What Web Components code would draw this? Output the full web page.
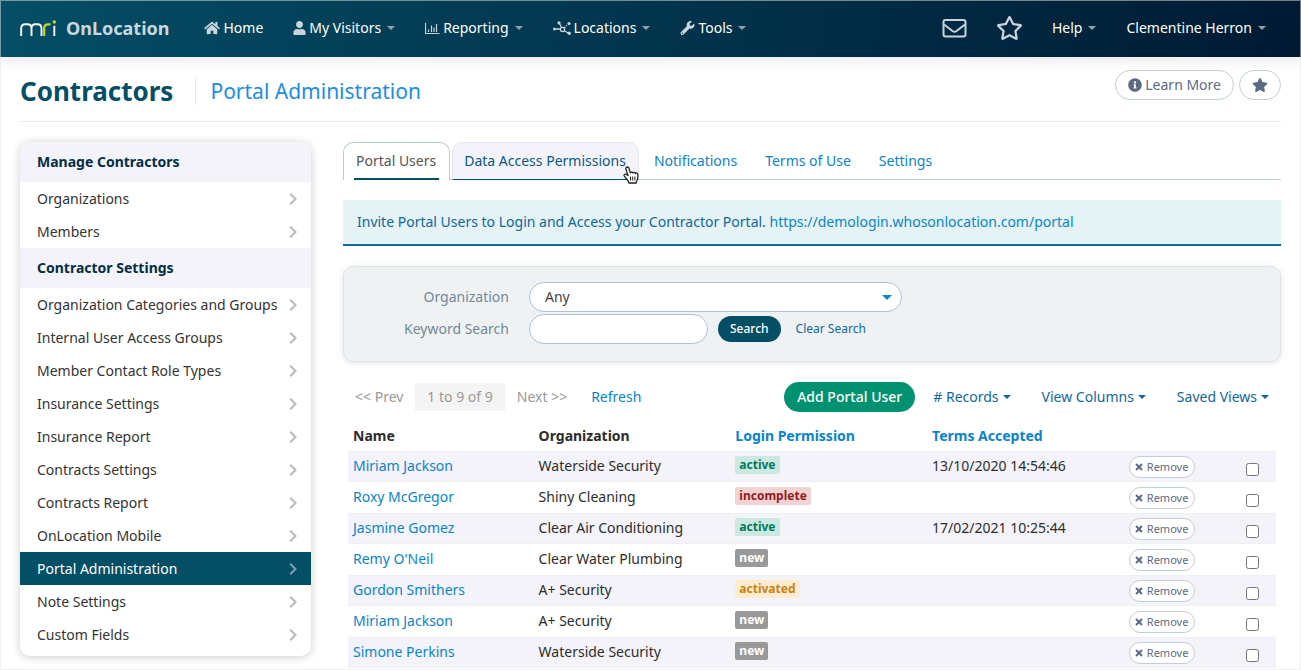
<!DOCTYPE html>
<html lang="en">
<head>
<meta charset="utf-8">
<meta name="viewport" content="width=device-width, initial-scale=1">
<title>Contractors - Portal Administration</title>
<style>
    body {
        margin: 0;
        background: #fff;
        color: #2d2d2d;
        font: 14px/20px "Noto Sans", sans-serif;
    }
</style>
</head>
<body>
<app-shell>
    <app-header slot="header">
        <nav-item icon="home" href="#home">Home</nav-item>
        <nav-item icon="user" menu>My Visitors</nav-item>
        <nav-item icon="chart" menu>Reporting</nav-item>
        <nav-item icon="nodes" menu>Locations</nav-item>
        <nav-item icon="wrench" menu>Tools</nav-item>
        <nav-item slot="right" icon="envelope" size="large" href="#messages" label="Messages"></nav-item>
        <nav-item slot="right" icon="star-outline" size="large" href="#favourites" label="Favourites"></nav-item>
        <nav-item slot="right" menu>Help</nav-item>
        <nav-item slot="right" menu>Clementine Herron</nav-item>
    </app-header>

    <page-title slot="title" section="Contractors">Portal Administration</page-title>

    <side-menu slot="menu">
        <side-heading>Manage Contractors</side-heading>
        <side-link>Organizations</side-link>
        <side-link>Members</side-link>
        <side-heading>Contractor Settings</side-heading>
        <side-link>Organization Categories and Groups</side-link>
        <side-link>Internal User Access Groups</side-link>
        <side-link>Member Contact Role Types</side-link>
        <side-link>Insurance Settings</side-link>
        <side-link>Insurance Report</side-link>
        <side-link>Contracts Settings</side-link>
        <side-link>Contracts Report</side-link>
        <side-link>OnLocation Mobile</side-link>
        <side-link active>Portal Administration</side-link>
        <side-link>Note Settings</side-link>
        <side-link>Custom Fields</side-link>
    </side-menu>

    <tab-bar>
        <tab-link selected>Portal Users</tab-link>
        <tab-link hovered>Data Access Permissions</tab-link>
        <tab-link>Notifications</tab-link>
        <tab-link>Terms of Use</tab-link>
        <tab-link>Settings</tab-link>
    </tab-bar>
    <info-notice href="https://demologin.whosonlocation.com/portal">Invite Portal Users to Login and Access your Contractor Portal.</info-notice>
    <filter-panel></filter-panel>
    <list-toolbar></list-toolbar>
    <user-table></user-table>
</app-shell>

<script>
const ICONS = {
    home: ["0 0 576 512", `<path d="M280.37 148.26L96 300.11V464a16 16 0 0 0 16 16l112.06-.29a16 16 0 0 0 15.92-16V368a16 16 0 0 1 16-16h64a16 16 0 0 1 16 16v95.64a16 16 0 0 0 16 16.05L464 480a16 16 0 0 0 16-16V300L295.67 148.26a12.19 12.19 0 0 0-15.3 0zM571.6 251.47L488 182.56V44.05a12 12 0 0 0-12-12h-56a12 12 0 0 0-12 12v72.61L318.47 43a48 48 0 0 0-61 0L4.34 251.47a12 12 0 0 0-1.6 16.9l25.5 31A12 12 0 0 0 45.15 301l235.22-193.74a12.19 12.19 0 0 1 15.3 0L530.9 301a12 12 0 0 0 16.9-1.6l25.5-31a12 12 0 0 0-1.7-16.93z"/>`],
    user: ["0 0 448 512", `<path d="M224 256c70.7 0 128-57.3 128-128S294.7 0 224 0 96 57.3 96 128s57.3 128 128 128zm89.6 32h-16.7c-22.2 10.2-46.9 16-72.9 16s-50.6-5.8-72.9-16h-16.7C60.2 288 0 348.2 0 422.4V464c0 26.5 21.5 48 48 48h352c26.5 0 48-21.5 48-48v-41.6c0-74.2-60.2-134.4-134.4-134.4z"/>`],
    chart: ["0 0 15 14", `<path d="M.5 2v10.500H14.500M3.500 11V8.500M6.500 11V4.500M9 11V6.500M11.500 11V3" fill="none" stroke="currentColor" stroke-width="1.200"/>`],
    nodes: ["0 0 18 14", `<g fill="none" stroke="currentColor" stroke-width="1.300"><circle cx="9.500" cy="8.500" r="2.100"/><path d="M3 8h4.200M6.500 2.500l2 4M11.200 7L12.500 5.800M11.200 9.800l4.500 2.400"/></g><circle cx="1.500" cy="8" r="1.500"/><circle cx="6" cy="1.800" r="1.600"/><circle cx="13.600" cy="4.600" r=".7"/><circle cx="16" cy="2.600" r="1.600"/><circle cx="16.200" cy="12.300" r="1.700"/>`],
    wrench: ["0 0 512 512", `<path d="M507.73 109.1c-2.24-9.03-13.54-12.09-20.12-5.51l-74.36 74.36-67.88-11.31-11.31-67.88 74.36-74.36c6.62-6.62 3.43-17.9-5.66-20.16-47.38-11.74-99.55.91-136.58 37.93-39.64 39.64-50.55 97.1-34.05 147.2L18.74 402.76c-24.99 24.99-24.99 65.51 0 90.5 24.99 24.99 65.51 24.99 90.5 0l213.21-213.21c50.12 16.71 107.47 5.68 147.37-34.22 37.07-37.07 49.7-89.32 37.91-136.73zM64 472c-13.25 0-24-10.75-24-24 0-13.26 10.75-24 24-24s24 10.75 24 24c0 13.25-10.75 24-24 24z"/>`],
    envelope: ["0 0 24 24", `<g fill="none" stroke="currentColor" stroke-width="2"><rect x="1" y="4" width="22" height="16.500" rx="2"/><path d="M1.500 8.500l8.500 6.500q2 1.400 4 0l8.500-6.500"/></g>`],
    "star-outline": ["20 0 536 512", `<path d="M528.1 171.5L382 150.2 316.700 17.800c-11.700-23.600-45.600-23.900-57.400 0L194 150.200 47.900 171.500c-26.200 3.800-36.700 36.100-17.700 54.600l105.700 103-25 145.500c-4.500 26.300 23.200 46 46.400 33.700L288 439.600l130.700 68.700c23.200 12.200 50.900-7.400 46.400-33.700l-25-145.500 105.700-103c19-18.500 8.500-50.800-17.700-54.600zM388.600 312.300l23.700 138.400L288 385.400l-124.300 65.300 23.700-138.400-100.600-98 139-20.200 62.200-126 62.200 126 139 20.200-100.600 98z"/>`],
    star: ["0 0 576 512", `<path d="M259.300 17.800L194 150.200 47.900 171.500c-26.200 3.800-36.700 36.100-17.700 54.600l105.700 103-25 145.500c-4.500 26.300 23.200 46 46.400 33.700L288 439.600l130.700 68.700c23.200 12.200 50.900-7.400 46.400-33.700l-25-145.500 105.700-103c19-18.500 8.500-50.800-17.700-54.600L382 150.200 316.700 17.800c-11.700-23.600-45.600-23.900-57.400 0z"/>`],
    info: ["0 0 512 512", `<path d="M256 8C119.043 8 8 119.083 8 256c0 136.997 111.043 248 248 248s248-111.003 248-248C504 119.083 392.957 8 256 8zm0 110c23.196 0 42 18.804 42 42s-18.804 42-42 42-42-18.804-42-42 18.804-42 42-42zm56 254c0 6.627-5.373 12-12 12h-88c-6.627 0-12-5.373-12-12v-24c0-6.627 5.373-12 12-12h12v-64h-12c-6.627 0-12-5.373-12-12v-24c0-6.627 5.373-12 12-12h64c6.627 0 12 5.373 12 12v100h12c6.627 0 12 5.373 12 12v24z"/>`],
    caret: ["0 0 8 4", `<path d="M0 0h8L4 4z"/>`],
    chevron: ["0 0 8 12", `<path d="M1.200 .8l5.300 5.200-5.300 5.200" fill="none" stroke="currentColor" stroke-width="2"/>`],
    cross: ["0 0 8 8", `<path d="M1 1l6 6M7 1L1 7" fill="none" stroke="currentColor" stroke-width="2"/>`],
    hand: ["0 0 16 18", `<path d="M4.200 1c-1.200.2-1.700 1.200-1.300 2.300l2.200 6.300-1.600-1.200C2.400 7.700 1 8.300 1 9.500c0 .7 2.600 3.300 4 5.300.6.900.8 1.300.8 2.200h7.400c.1-1.200.5-2 1-3 .8-1.700.9-3.700.6-5.600-.2-1.400-1.600-1.700-2.300-.9-.2-1.200-1.800-1.500-2.500-.5-.5-1.100-2-1.200-2.700-.2L5.900 2.100C5.600 1.300 5 .9 4.200 1z" fill="#fff" stroke="#222" stroke-width="1.300" stroke-linejoin="round"/><path d="M7.500 10.500v4M9.700 10.500v4M11.900 10.500v4" stroke="#222"/>`],
    logo: ["0 0 36 17", `<g fill="none" stroke-width="1.900"><path d="M1.200 16V8.500Q1.200 4.300 5.500 4.300H7.300Q11.500 4.300 11.500 8.500V16M11.500 8.500Q11.500 4.300 15.500 4.300H17.300Q21.500 4.300 21.500 8.500V16" stroke="#fff"/><path d="M24.200 16V8.500Q24.200 4.300 28.200 4.300H30.500" stroke="#c1d72e" stroke-width="2.200"/><path d="M34.300 16V5.800" stroke="#fff"/></g><circle cx="34.300" cy="2" r="1.700" fill="#c1d72e"/>`]
};

// attaches the shadow root shared by every element below
class BaseElement extends HTMLElement {
    render(html) {
        if (!this.shadowRoot) {
            this.attachShadow({ mode: "open" });
        }
        this.shadowRoot.innerHTML = html;
    }
}

class AppIcon extends BaseElement {
    connectedCallback() {
        const [box, shape] = ICONS[this.getAttribute("name")];
        this.render(`
            <style>
                :host { display: inline-flex; flex: none; }
                svg { display: block; width: 100%; height: 100%; }
            </style>
            <svg viewBox="${box}" fill="currentColor" aria-hidden="true">${shape}</svg>
        `);
    }
}

class AppShell extends BaseElement {
    connectedCallback() {
        this.render(`
            <style>
                :host {
                    display: block;
                    min-height: 100vh;
                }
                :host::after {
                    content: "";
                    position: fixed;
                    inset: 0;
                    border: 1px solid rgba(225, 228, 230, 0.5);
                    pointer-events: none;
                }
                .title { padding: 0 20px; }
                .content {
                    display: grid;
                    grid-template-columns: 291px minmax(0, 1fr);
                    align-items: start;
                    gap: 32px;
                    padding: 20px 20px 0;
                }
            </style>
            <slot name="header"></slot>
            <div class="title"><slot name="title"></slot></div>
            <div class="content">
                <slot name="menu"></slot>
                <main><slot></slot></main>
            </div>
        `);
    }
}

class AppHeader extends BaseElement {
    connectedCallback() {
        this.render(`
            <style>
                :host {
                    display: flex;
                    align-items: center;
                    justify-content: space-between;
                    height: 57px;
                    padding: 0 35px 1px 20px;
                    background: linear-gradient(100deg, #044e66, #001a33);
                    box-shadow: 0 3px 12px rgba(60, 60, 90, 0.12);
                    color: #fff;
                    box-sizing: border-box;
                }
                nav, .right, .brand {
                    display: flex;
                    align-items: center;
                }
                nav, .right { gap: 30px; }
                .brand {
                    gap: 10px;
                    margin-right: 5px;
                    color: #c8d8df;
                    font-size: 18px;
                    font-weight: 700;
                    text-decoration: none;
                }
                .brand app-icon { width: 36px; height: 17px; }
            </style>
            <nav>
                <a class="brand" href="#"><app-icon name="logo"></app-icon>OnLocation</a>
                <slot></slot>
            </nav>
            <div class="right"><slot name="right"></slot></div>
        `);
    }
}

class NavItem extends BaseElement {
    connectedCallback() {
        const icon = this.getAttribute("icon");
        const menu = this.hasAttribute("menu");
        const label = this.getAttribute("label");
        const tag = menu ? "button" : "a";
        const attrs = menu ? `type="button" aria-haspopup="true"` : `href="${this.getAttribute("href")}"`;
        this.render(`
            <style>
                :host { display: block; }
                a, button {
                    display: flex;
                    align-items: center;
                    gap: 3px;
                    padding: 0;
                    border: 0;
                    background: none;
                    color: inherit;
                    font: inherit;
                    text-decoration: none;
                    white-space: nowrap;
                    cursor: pointer;
                }
                .icon { width: 15px; height: 14px; color: #c9d5dc; }
                .home { width: 16px; }
                .user { width: 13px; }
                .nodes { width: 18px; }
                .large { width: 25px; height: 24px; }
                .caret {
                    width: 8px;
                    height: 4px;
                    margin-left: 3px;
                    color: #8ea3b0;
                }
            </style>
            <${tag} ${attrs} ${label ? `aria-label="${label}"` : ""}>
                ${icon ? `<app-icon class="icon ${icon} ${this.getAttribute("size") || ""}" name="${icon}"></app-icon>` : ""}
                ${label ? "" : "<slot></slot>"}
                ${menu ? `<app-icon class="caret" name="caret"></app-icon>` : ""}
            </${tag}>
        `);
    }
}

class PageTitle extends BaseElement {
    connectedCallback() {
        this.render(`
            <style>
                :host {
                    display: flex;
                    justify-content: space-between;
                    padding: 13px 0 16px;
                    border-bottom: 1px solid #ebebeb;
                }
                .heading, .actions { display: flex; }
                .heading { align-items: center; padding-top: 7px; }
                h1, h2 { margin: 0; line-height: 28px; }
                h1 {
                    padding-right: 22px;
                    border-right: 1px solid #e8e8ec;
                    color: #044e66;
                    font-size: 26px;
                    font-weight: 700;
                }
                h2 {
                    padding-left: 14px;
                    color: #1a8fdf;
                    font-size: 21px;
                    font-weight: 400;
                }
                .actions { gap: 5px; align-items: flex-start; }
                button {
                    display: flex;
                    align-items: center;
                    gap: 3px;
                    height: 30px;
                    padding: 0 12px;
                    border: 1px solid #c2cfd4;
                    border-radius: 15px;
                    background: #fff;
                    color: #5d6b82;
                    font: inherit;
                }
                .info { width: 14px; height: 14px; }
                .star { width: 16px; height: 14px; }
            </style>
            <div class="heading">
                <h1>${this.getAttribute("section")}</h1>
                <h2><slot></slot></h2>
            </div>
            <div class="actions">
                <button type="button"><app-icon class="info" name="info"></app-icon>Learn More</button>
                <button type="button" aria-label="Add to favourites"><app-icon class="star" name="star"></app-icon></button>
            </div>
        `);
    }
}

class SideMenu extends BaseElement {
    connectedCallback() {
        this.render(`
            <style>
                :host {
                    display: block;
                    padding-bottom: 5px;
                    border-radius: 10px;
                    box-shadow: 0 1px 10px rgba(0, 0, 0, 0.2);
                    overflow: hidden;
                }
            </style>
            <nav><slot></slot></nav>
        `);
    }
}

class SideHeading extends BaseElement {
    connectedCallback() {
        this.render(`
            <style>
                :host { display: block; }
                h3 {
                    margin: 0;
                    padding: 10px 17px;
                    background: #f4f3f9;
                    color: #032e45;
                    font-size: 14px;
                    font-weight: 700;
                }
            </style>
            <h3><slot></slot></h3>
        `);
    }
}

class SideLink extends BaseElement {
    connectedCallback() {
        this.render(`
            <style>
                :host { display: block; }
                a {
                    display: flex;
                    align-items: center;
                    justify-content: space-between;
                    height: 33px;
                    padding: 0 14px 0 17px;
                    color: #333;
                    text-decoration: none;
                    white-space: nowrap;
                }
                app-icon { width: 8px; height: 12px; color: #b9b9b9; }
                :host([active]) a { background: #044e66; color: #fff; }
                :host([active]) app-icon { color: #7fa0ae; }
            </style>
            <a href="#"><slot></slot><app-icon name="chevron"></app-icon></a>
        `);
    }
}

class TabBar extends BaseElement {
    connectedCallback() {
        this.render(`
            <style>
                :host {
                    display: flex;
                    gap: 2px;
                    box-shadow: inset 0 -1px #bccbd0;
                }
            </style>
            <slot></slot>
        `);
    }
}

class TabLink extends BaseElement {
    connectedCallback() {
        this.render(`
            <style>
                :host { display: block; position: relative; }
                a {
                    display: block;
                    padding: 8px 12px 9px;
                    border: 1px solid transparent;
                    border-bottom: 0;
                    border-radius: 10px 10px 0 0;
                    color: #0a84cb;
                    text-decoration: none;
                    white-space: nowrap;
                }
                :host([selected]) a {
                    padding: 8px 10px 0;
                    border-color: #bccbd0;
                    background: #fff;
                    color: #555;
                }
                :host([selected]) span {
                    display: block;
                    padding: 0 3px 7px 2px;
                    border-bottom: 2px solid #044e66;
                }
                :host([hovered]) a {
                    padding: 8px 12px 8px 11px;
                    border-color: #e6e8ee;
                    border-bottom: 1px solid #044e66;
                    background: #f4f3f9;
                    color: #0b5885;
                }
                app-icon {
                    position: absolute;
                    right: 0;
                    bottom: -4px;
                    width: 16px;
                    height: 18px;
                    z-index: 1;
                }
            </style>
            <a href="#"><span><slot></slot></span></a>
            ${this.hasAttribute("hovered") ? `<app-icon name="hand"></app-icon>` : ""}
        `);
    }
}

class InfoNotice extends BaseElement {
    connectedCallback() {
        const href = this.getAttribute("href");
        this.render(`
            <style>
                :host {
                    display: block;
                    margin: 20px 0;
                    padding: 12px 14px;
                    border-bottom: 2px solid #11679b;
                    background: #e5f3f5;
                    color: #11679b;
                }
                a { color: #0a84cb; text-decoration: none; }
            </style>
            <slot></slot> <a href="${href}">${href}</a>
        `);
    }
}

class FilterPanel extends BaseElement {
    connectedCallback() {
        this.render(`
            <style>
                :host { display: block; }
                form {
                    display: grid;
                    grid-template-columns: 150px minmax(0, 1fr);
                    align-items: center;
                    gap: 2px 20px;
                    padding: 15px 15px 17px;
                    border: 1px solid #dfe3e6;
                    border-radius: 10px;
                    background: #eff2f3;
                    box-shadow: 0 1px 6px rgba(0, 0, 0, 0.1);
                }
                label { color: #74889a; text-align: right; }
                .select {
                    display: grid;
                    align-items: center;
                    max-width: 373px;
                }
                .select > * { grid-area: 1 / 1; }
                .select app-icon {
                    justify-self: end;
                    width: 10px;
                    height: 5px;
                    margin-right: 10px;
                    color: #0a84cb;
                    pointer-events: none;
                }
                select, input {
                    height: 30px;
                    padding: 0 15px;
                    border: 1px solid #b3c0d8;
                    border-radius: 15px;
                    background: #fff;
                    color: #444;
                    font: inherit;
                    box-sizing: border-box;
                }
                select { appearance: none; width: 100%; }
                input { width: 179px; }
                .row { display: flex; align-items: center; }
                button {
                    height: 26px;
                    margin: 0 15px 0 10px;
                    padding: 0 12px;
                    border: 0;
                    border-radius: 13px;
                    background: #044e66;
                    color: #fff;
                    font: inherit;
                    font-size: 12px;
                    font-weight: 500;
                }
                .clear { color: #11679b; font-size: 12px; text-decoration: none; }
            </style>
            <form>
                <label for="organization">Organization</label>
                <div class="select">
                    <select id="organization"><option>Any</option></select>
                    <app-icon name="caret"></app-icon>
                </div>
                <label for="keyword">Keyword Search</label>
                <div class="row">
                    <input id="keyword" type="text">
                    <button type="button">Search</button>
                    <a class="clear" href="#">Clear Search</a>
                </div>
            </form>
        `);
    }
}

class ListToolbar extends BaseElement {
    connectedCallback() {
        this.render(`
            <style>
                :host {
                    display: flex;
                    justify-content: space-between;
                    align-items: center;
                    margin-top: 20px;
                    padding: 0 12px;
                }
                .pager, .tools { display: flex; align-items: center; }
                .pager { gap: 12px; color: #999; }
                .range { padding: 4px 12px; background: #f4f4f4; }
                a { color: #0a84cb; text-decoration: none; }
                .pager a { margin-left: 12px; }
                .tools { gap: 31px; }
                button {
                    display: flex;
                    align-items: center;
                    gap: 4px;
                    padding: 0;
                    border: 0;
                    background: none;
                    color: #11679b;
                    font: inherit;
                    white-space: nowrap;
                }
                button app-icon { width: 8px; height: 4px; }
                .add {
                    height: 30px;
                    margin-right: -13px;
                    padding: 0 13px;
                    border-radius: 15px;
                    background: #009270;
                    color: #fff;
                    font-weight: 500;
                }
            </style>
            <div class="pager">
                <span>&lt;&lt; Prev</span>
                <span class="range">1 to 9 of 9</span>
                <span>Next &gt;&gt;</span>
                <a href="#">Refresh</a>
            </div>
            <div class="tools">
                <button class="add" type="button">Add Portal User</button>
                <button type="button"># Records<app-icon name="caret"></app-icon></button>
                <button type="button">View Columns<app-icon name="caret"></app-icon></button>
                <button type="button">Saved Views<app-icon name="caret"></app-icon></button>
            </div>
        `);
    }
}

class StatusBadge extends BaseElement {
    connectedCallback() {
        this.render(`
            <style>
                :host {
                    display: inline-block;
                    padding: 0 4px;
                    border-radius: 2px;
                    background: #999;
                    color: #fff;
                    font-size: 12px;
                    font-weight: 700;
                    line-height: 18px;
                    vertical-align: top;
                }
                :host([type="active"]) { background: #cce9e1; color: #00795c; }
                :host([type="incomplete"]) { background: #f2d2d3; color: #941b1e; }
                :host([type="activated"]) { background: #ffecce; color: #c98212; }
            </style>
            <slot></slot>
        `);
    }
}

class UserTable extends BaseElement {
    constructor() {
        super();

        this.users = [
            ["Miriam Jackson", "Waterside Security", "active", "13/10/2020 14:54:46"],
            ["Roxy McGregor", "Shiny Cleaning", "incomplete", ""],
            ["Jasmine Gomez", "Clear Air Conditioning", "active", "17/02/2021 10:25:44"],
            ["Remy O'Neil", "Clear Water Plumbing", "new", ""],
            ["Gordon Smithers", "A+ Security", "activated", ""],
            ["Miriam Jackson", "A+ Security", "new", ""],
            ["Simone Perkins", "Waterside Security", "new", ""]
        ];
    }

    row([name, organization, status, accepted]) {
        return `
            <tr>
                <td><a href="#">${name}</a></td>
                <td>${organization}</td>
                <td><status-badge type="${status}">${status}</status-badge></td>
                <td>${accepted}</td>
                <td class="action"><button type="button"><app-icon name="cross"></app-icon>Remove</button></td>
                <td class="check"><input type="checkbox" aria-label="Select ${name}"></td>
            </tr>
        `;
    }

    connectedCallback() {
        this.render(`
            <style>
                :host { display: block; margin: 9px 5px 0; }
                table {
                    width: 100%;
                    table-layout: fixed;
                    border-collapse: separate;
                    border-spacing: 0;
                }
                th, td {
                    height: 31px;
                    padding: 0 5px;
                    text-align: left;
                    white-space: nowrap;
                    box-sizing: border-box;
                }
                th { height: 30px; }
                td { padding-bottom: 2px; }
                .name { width: 20%; }
                .data { width: 21.2%; }
                tbody tr:nth-child(odd) td {
                    background: #f4f3f9;
                    box-shadow: inset 0 1px #eef0f4, inset 0 -1px #eef0f4;
                }
                a { color: #0a84cb; text-decoration: none; }
                button {
                    display: flex;
                    align-items: center;
                    gap: 4px;
                    height: 22px;
                    padding: 0 6px 0 5px;
                    border: 1px solid #c2cfd4;
                    border-radius: 11px;
                    background: #fff;
                    color: #5d6b82;
                    font: inherit;
                    font-size: 11px;
                }
                button app-icon { width: 8px; height: 8px; }
                .action, .check { padding-bottom: 0; }
                .check { padding-right: 17px; text-align: right; }
                .check input { margin: 4px 0 0; vertical-align: middle; }
            </style>
            <table>
                <thead>
                    <tr>
                        <th class="name">Name</th>
                        <th class="data">Organization</th>
                        <th class="data"><a href="#">Login Permission</a></th>
                        <th class="data"><a href="#">Terms Accepted</a></th>
                        <th></th>
                        <th></th>
                    </tr>
                </thead>
                <tbody>${this.users.map((user) => this.row(user)).join("")}</tbody>
            </table>
        `);
    }
}

window.customElements.define("app-icon", AppIcon);
window.customElements.define("app-shell", AppShell);
window.customElements.define("app-header", AppHeader);
window.customElements.define("nav-item", NavItem);
window.customElements.define("page-title", PageTitle);
window.customElements.define("side-menu", SideMenu);
window.customElements.define("side-heading", SideHeading);
window.customElements.define("side-link", SideLink);
window.customElements.define("tab-bar", TabBar);
window.customElements.define("tab-link", TabLink);
window.customElements.define("info-notice", InfoNotice);
window.customElements.define("filter-panel", FilterPanel);
window.customElements.define("list-toolbar", ListToolbar);
window.customElements.define("status-badge", StatusBadge);
window.customElements.define("user-table", UserTable);
</script>
</body>
</html>
